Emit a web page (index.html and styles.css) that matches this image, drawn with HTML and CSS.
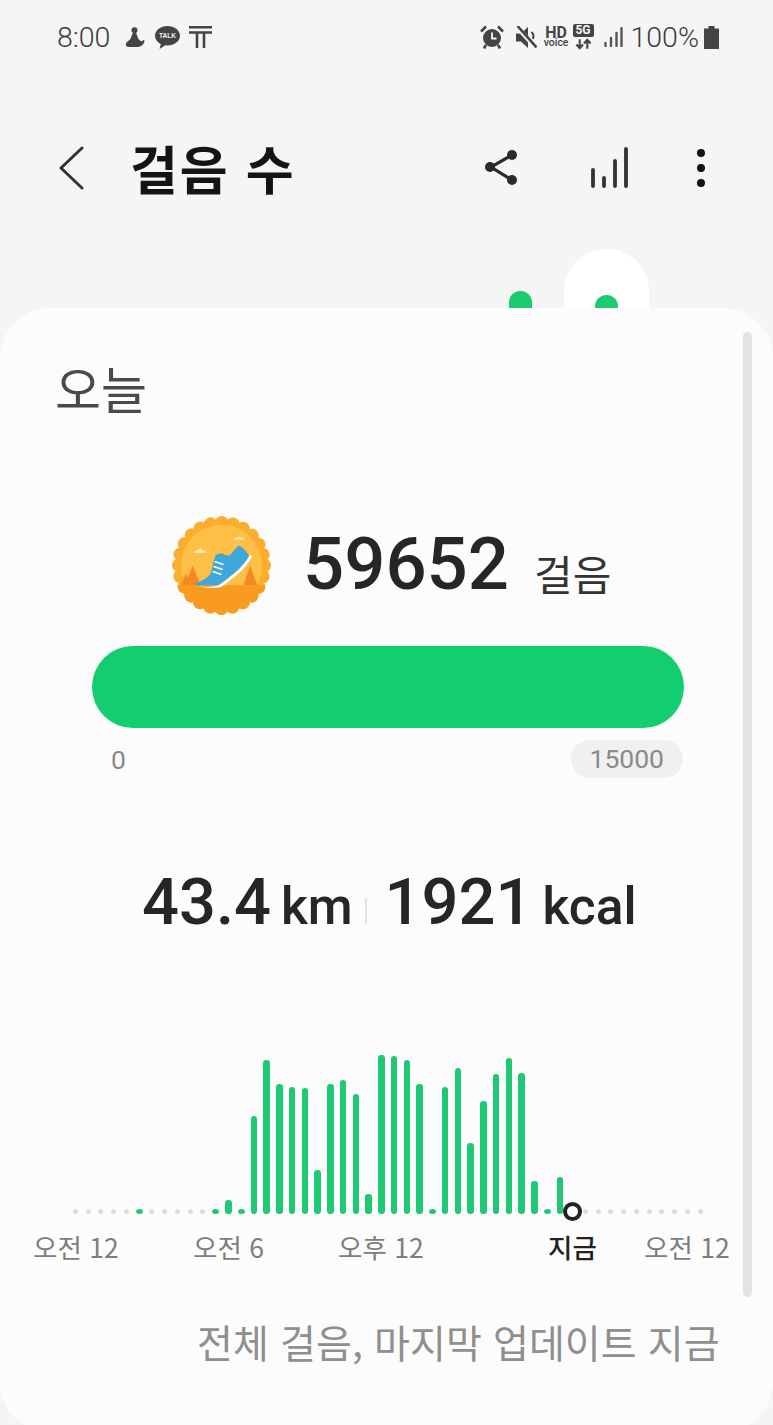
FILE: index.html
```html
<!DOCTYPE html>
<html lang="ko">
<head>
<meta charset="utf-8">
<title>걸음 수</title>
<link rel="stylesheet" href="styles.css">
</head>
<body>
<div class="phone">
  <header class="status">
    <div class="status-left">
      <span class="time">8:00</span>
      <svg class="ic-person" viewBox="0 0 20 20"><circle cx="9.500" cy="3.200" r="3" fill="#444"/><path d="M7.500 6.500c2-1 4-.5 4.500 1.500.5 2 1 4 3 5.500 1.200.9 2.500 1 3-.5l1.500.5c-.2 3.500-3 6.500-7 6.500H4c-2.500 0-3.800-1.500-3-3.500.7-1.700 2.500-2.500 4-4 1.300-1.300 1.500-4.500 2.500-6z" fill="#444"/></svg>
      <svg class="ic-talk" viewBox="0 0 25 23"><path d="M12.500 0C5.600 0 0 4.300 0 9.700c0 3.500 2.300 6.500 5.800 8.200L4.600 23l5.700-3.800c.7.100 1.500.2 2.200.2 6.900 0 12.500-4.300 12.500-9.700S19.400 0 12.500 0z" fill="#444"/><text x="12.500" y="12.300" class="talk-text">TALK</text></svg>
      <svg class="ic-t" viewBox="0 0 23 22"><path d="M0 1.300h23M0 6.500h23M8 6.500V22M15 6.500V22" stroke="#444" stroke-width="2.600" fill="none"/></svg>
    </div>
    <div class="status-right">
      <svg class="ic-alarm" viewBox="0 0 24 24"><circle cx="12" cy="13" r="9" fill="#444"/><path d="M12 7.500v6h4.500" stroke="#f5f5f5" stroke-width="1.800" fill="none"/><path d="M1 6.500 6 1.500M23 6.500 18 1.500M6 20l-2 3.500M18 20l2 3.500" stroke="#444" stroke-width="2.600" fill="none"/></svg>
      <svg class="ic-mute" viewBox="0 0 21 23"><path d="M0 7.500h5L12 1v21l-7-6.500H0z" fill="#444"/><path d="M1 1 20 22" stroke="#f5f5f5" stroke-width="4.500"/><path d="M1.500 0 20.500 21.500" stroke="#444" stroke-width="2.600"/><path d="M15.500 6c2 1.800 2.300 4.500 1.500 7" stroke="#444" stroke-width="2" fill="none"/></svg>
      <div class="hd"><span class="hd-top">HD</span><span class="hd-sub">voice</span></div>
      <div class="fiveg"><span class="fiveg-box">5G</span><svg class="ic-arrows" viewBox="0 0 18 12"><path d="M5 1v9M1.500 6.500 5 10.500l3.500-4M13 11V2M9.500 5.500 13 1.500l3.500 4" stroke="#444" stroke-width="2.200" fill="none"/></svg></div>
      <svg class="ic-signal" viewBox="0 0 19 20"><path d="M1.500 19v-3M7 19v-8M12.500 19V6M17.500 19V1" stroke="#555" stroke-width="2.400" stroke-linecap="round"/></svg>
      <span class="pct">100%</span>
      <svg class="ic-batt" viewBox="0 0 15 23"><path d="M4.500 0h6v2.500H15V23H0V2.500h4.500z" fill="#444"/></svg>
    </div>
  </header>

  <nav class="appbar">
    <svg class="ic-back" viewBox="0 0 25 44"><path d="M23 2 2 22l21 20" stroke="#333" stroke-width="3" fill="none" stroke-linecap="round" stroke-linejoin="round"/></svg>
    <h1 class="title">걸음 수</h1>
    <div class="actions">
      <svg class="ic-share" viewBox="0 0 36 40"><path d="M28 7 7 19l21 13" stroke="#2b2b2b" stroke-width="3.200" fill="none"/><circle cx="28" cy="7" r="5" fill="#2b2b2b"/><circle cx="6" cy="19" r="5" fill="#2b2b2b"/><circle cx="28" cy="32" r="5" fill="#2b2b2b"/></svg>
      <svg class="ic-bars" viewBox="0 0 38 42"><path d="M3 39V23M14 39V31M25 39V14M36 39V2" stroke="#333" stroke-width="3.800" stroke-linecap="round"/></svg>
      <div class="more"><i></i><i></i><i></i></div>
    </div>
  </nav>

  <div class="tabs">
    <div class="tab"><span class="tab-dot tab-dot-high"></span></div>
    <div class="tab tab-on"><span class="tab-dot"></span></div>
  </div>

  <main class="card">
    <div class="scrollbar"></div>
    <h2 class="today">오늘</h2>

    <section class="count-row">
      <svg class="badge" viewBox="0 0 100 100">
        <defs><clipPath id="lower"><rect x="0" y="70" width="100" height="30"/></clipPath></defs>
        <circle cx="50" cy="50" r="43" fill="#fbae2e" stroke="#fbae2e" stroke-width="14" stroke-dasharray="0 11.257" stroke-linecap="round"/>
        <circle cx="50" cy="50" r="41" fill="#fdbf45"/>
        <g clip-path="url(#lower)">
          <circle cx="50" cy="50" r="43" fill="#f89b20" stroke="#f89b20" stroke-width="14" stroke-dasharray="0 11.257" stroke-linecap="round"/>
        </g>
        <path fill="#f5891f" d="M13 70 21 50 29 70ZM9 70 14 58 19 70ZM72 70 79 50 86 70Z"/>
        <path fill="#fde6ae" d="M22 37h13c0-2-2-3-4-2-1-3-5-2-6 0-2 0-3 1-3 2zM62 24h11c0-2-2-2-3-2-2-2-4-1-5 0-2 0-3 1-3 2z"/>
        <path fill="#3fa7da" d="M23 68c6-2 13-5 16-10 2-5 3-14 5-18 2-2 5-2 7-2 3 2 5 2 7 2 3-3 6-8 10-10 4 2 8 6 10 11-4 7-9 12-14 16-5 4-11 9-17 13H25z"/>
        <path fill="#fff" d="M26 71c8 1 15 1 21-1 6-4 12-9 17-13 6-5 11-11 15-18l2 2c-4 7-9 13-15 18-6 5-11 9-17 13-7 1-15 1-23-1z"/>
        <path stroke="#fff" stroke-width="1.600" fill="none" d="M41 56l9 3M42 51l9 3M43 46l9 3"/>
      </svg>
      <span class="steps">59652</span>
      <span class="steps-unit">걸음</span>
    </section>

    <div class="progress"></div>
    <div class="scale">
      <span class="scale-min">0</span>
      <span class="scale-max">15000</span>
    </div>

    <section class="metrics">
      <span class="num">43.4</span><span class="unit">km</span>
      <span class="sep"></span>
      <span class="num">1921</span><span class="unit">kcal</span>
    </section>

    <section class="chart" id="chart"></section>
    <div class="axis">
      <span class="tick t1">오전 12</span>
      <span class="tick t2">오전 6</span>
      <span class="tick t3">오후 12</span>
      <span class="tick tnow">지금</span>
      <span class="tick t5">오전 12</span>
    </div>

    <p class="footer">전체 걸음, 마지막 업데이트 지금</p>
  </main>
</div>
<script src="chart.js"></script>
</body>
</html>
```
FILE: chart.js
```js
var tops = {5:'d',11:'d',12:1200,13:'d',14:1116,15:1060,16:1084,17:1087,18:1088,19:1170,20:1084,21:1080,22:1094,23:1194,24:1055,25:1056,26:1060,27:1084,28:'d',29:1087,30:1068,31:1143,32:1101,33:1074,34:1058,35:1073,36:1181,37:'d',38:1177};
var chart = document.getElementById('chart');
for (var i = 0; i < 50; i++) {
  var slot = document.createElement('div');
  slot.className = 'slot';
  var mark = document.createElement('span');
  var t = tops[i];
  if (i === 39) {
    mark.className = 'ring';
  } else if (t === 'd') {
    mark.className = 'dot-green';
  } else if (t) {
    mark.className = 'bar';
    mark.style.height = (1214 - t) + 'px';
  } else {
    mark.className = 'dot-gray';
  }
  slot.appendChild(mark);
  chart.appendChild(slot);
}
```
FILE: styles.css
```css
* { box-sizing: border-box; }
html, body { margin: 0; padding: 0; }
body {
  width: 773px;
  height: 1425px;
  overflow: hidden;
  background: #f5f5f5;
  font-family: "Roboto", "Noto Sans CJK KR", sans-serif;
}
.phone { width: 773px; height: 1425px; display: flex; flex-direction: column; }

.status {
  height: 74px;
  flex: none;
  padding: 0 54px 0 57px;
  display: flex;
  justify-content: space-between;
  align-items: center;
  color: #444;
}
.status-left, .status-right { display: flex; align-items: center; }
.time { font-size: 28.500px; font-weight: 300; margin-right: 15px; color: #3c3c3c; }
.ic-person { width: 20px; height: 20px; margin-right: 10px; }
.ic-talk { width: 25px; height: 23px; margin-right: 9px; }
.talk-text { font: 700 6.500px "Liberation Sans", sans-serif; fill: #f5f5f5; text-anchor: middle; }
.ic-t { width: 23px; height: 22px; }
.ic-alarm { width: 24px; height: 24px; margin-right: 12px; }
.ic-mute { width: 21px; height: 23px; margin-right: 7px; }
.hd { display: flex; flex-direction: column; align-items: center; margin-right: 4px; line-height: 1; }
.hd-top { font: 700 16px/11px "Roboto", sans-serif; }
.hd-sub { font: 500 10.500px/9px "Roboto", sans-serif; }
.fiveg { display: flex; flex-direction: column; align-items: center; margin-right: 10px; width: 21px; }
.fiveg-box { background: #444; color: #f5f5f5; font: 700 12px/13px "Roboto", sans-serif; width: 21px; text-align: center; border-radius: 2px; }
.ic-arrows { width: 17px; height: 12px; margin-top: 1px; }
.ic-signal { width: 19px; height: 20px; margin-right: 8px; }
.pct { font-size: 28.500px; font-weight: 300; margin-right: 5px; color: #3c3c3c; }
.ic-batt { width: 15px; height: 23px; }

.appbar {
  height: 72px;
  flex: none;
  margin-top: 58px;
  padding: 0 68px 0 59px;
  display: flex;
  align-items: center;
}
.ic-back { width: 25px; height: 44px; margin-right: 46px; }
.title { margin: 0; font: 700 52px/1 "Noto Sans CJK KR", sans-serif; color: #141414; letter-spacing: 1.800px; }
.actions { margin-left: auto; display: flex; align-items: center; }
.ic-share { width: 36px; height: 40px; margin-right: 70px; }
.ic-bars { width: 38px; height: 42px; margin-right: 69px; }
.more { width: 8px; display: flex; flex-direction: column; gap: 7px; }
.more i { display: block; width: 8px; height: 8px; border-radius: 50%; background: #111; }

.tabs {
  height: 59px;
  flex: none;
  margin-top: 45px;
  padding-left: 499px;
  display: flex;
  align-items: flex-end;
}
.tab { width: 42px; height: 59px; display: flex; justify-content: center; align-items: flex-end; }
.tab-on {
  width: 85px;
  margin-left: 23px;
  background: #fff;
  border-radius: 42px 42px 0 0;
}
.tab-dot { width: 23px; height: 13px; background: #1ccb70; border-radius: 12px 12px 0 0; }
.tab-dot-high { height: 17px; }

.card {
  height: 1124px;
  flex: none;
  background: #fcfcfc;
  border-radius: 50px;
  position: relative;
  display: flex;
  flex-direction: column;
}
.scrollbar {
  position: absolute;
  top: 24px;
  right: 21px;
  width: 9px;
  height: 965px;
  background: #e3e3e3;
  border-radius: 5px;
}
.today { margin: 49px 0 0 55px; font: 400 50px/60px "Noto Sans CJK KR", sans-serif; color: #4a4a4a; }

.count-row { margin-top: 99px; margin-left: 172px; height: 98px; display: flex; align-items: center; }
.badge { width: 99px; height: 99px; margin-right: 32px; flex: none; }
.steps { font: 500 72.500px/1 "Roboto", sans-serif; color: #262626; }
.steps-unit { font: 400 42px/1 "Noto Sans CJK KR", sans-serif; color: #333; margin-left: 25px; margin-top: 16px; }

.progress { margin: 32px 89px 0 92px; height: 82px; background: #12ce6e; border-radius: 41px; }
.scale { margin: 12px 90px 0 111px; display: flex; justify-content: space-between; align-items: center; color: #8a8a8a; font-size: 26.500px; }
.scale-max { background: #f0f0f0; border-radius: 19px; height: 38px; line-height: 38px; padding: 0 19px; }

.metrics { margin-top: 89px; margin-left: 142px; display: flex; align-items: baseline; color: #262626; height: 70px; }
.num { font: 500 65px/70px "Roboto", sans-serif; }
.unit { font: 500 51.500px/70px "Roboto", sans-serif; margin-left: 10px; }
.sep { width: 2px; height: 26px; background: #e4e4e4; margin: 0 18px 0 12px; }

.chart { margin-top: 87px; margin-left: 69px; height: 190px; flex: none; display: flex; align-items: flex-end; }
.slot { width: 12.750px; flex: none; display: flex; justify-content: center; align-items: flex-end; position: relative; }
.bar { width: 6.500px; background: #1fc873; border-radius: 3.250px; display: block; }
.dot-gray { width: 5px; height: 5px; border-radius: 50%; background: #dcdcdc; display: block; }
.dot-green { width: 7px; height: 5px; border-radius: 50%; background: #1fc873; display: block; }
.ring { width: 19px; height: 19px; margin: 0 -4px -7px; border: 4px solid #222; background: #fcfcfc; border-radius: 50%; flex: none; display: block; position: relative; z-index: 1; }

.axis { position: relative; height: 40px; margin-top: 13px; flex: none; font-size: 26.500px; color: #7d7d7d; }
.tick { position: absolute; top: 0; font-family: "Noto Sans CJK KR", sans-serif; line-height: 40px; white-space: nowrap; }
.t1 { left: 33px; }
.t2 { left: 193px; }
.t3 { left: 338px; }
.tnow { left: 548px; color: #222; font-weight: 500; }
.t5 { left: 644px; }

.footer { margin: 51px 0 0 197px; font: 400 39px/1.200 "Noto Sans CJK KR", sans-serif; color: #8f8f8f; white-space: nowrap; letter-spacing: 0.100px; }
```
